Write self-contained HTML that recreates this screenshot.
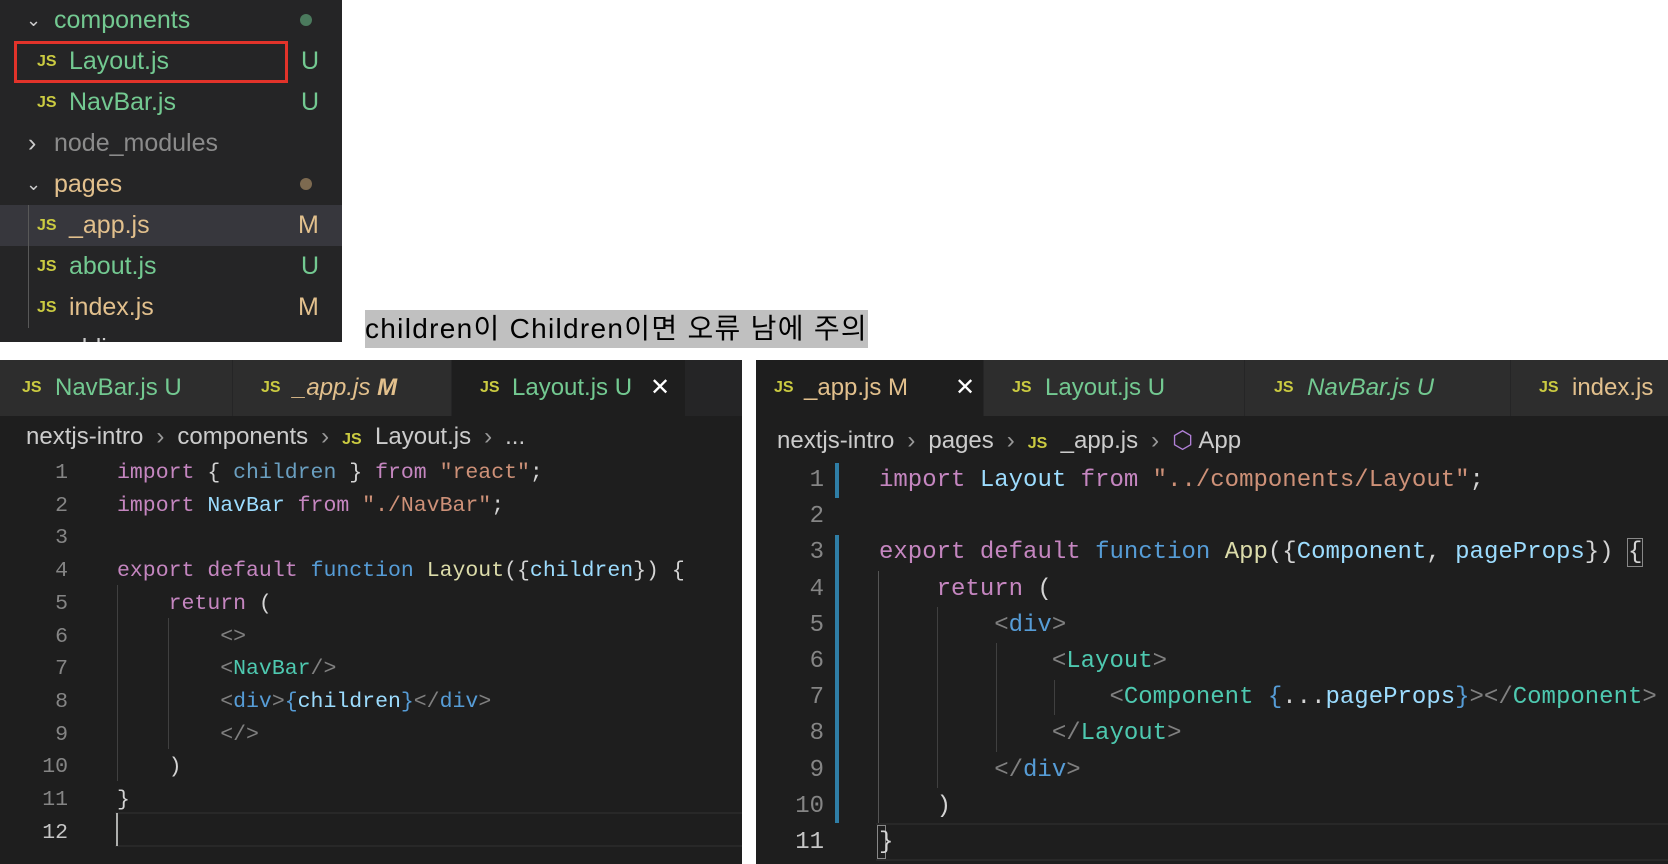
<!DOCTYPE html>
<html><head><meta charset="utf-8"><style>
*{margin:0;padding:0;box-sizing:border-box}
body{width:1668px;height:864px;background:#fff;position:relative;overflow:hidden;font-family:"Liberation Sans","Noto Sans CJK KR",sans-serif}
.abs{position:absolute;white-space:pre}
.sb{position:absolute;left:0;top:0;width:342px;height:342px;background:#252526;overflow:hidden}
.row{position:absolute;left:0;width:342px;height:41px;font-size:25px;line-height:41px}
.js{color:#cbcb41;font-weight:bold;font-size:16px;position:absolute}
.g{color:#73c991}.m{color:#e2c08d}.gr{color:#cccccc}
.panel{position:absolute;top:360px;height:504px;background:#1e1e1e;overflow:hidden}
.tabs{position:absolute;left:0;top:0;right:0;height:56px;background:#252526}
.tab{position:absolute;top:0;height:56px;background:#2d2d2d;font-size:24px;line-height:56px;border-right:1px solid #252526}
.tab.act{background:#1e1e1e}
.bc{position:absolute;font-size:24px;color:#cccccc;white-space:pre}
.ch{color:#999;margin:0 13px}
.code{font-family:"Liberation Mono","DejaVu Sans Mono",monospace}
.ln{position:absolute;text-align:right;color:#858585}
.kw{color:#c586c0}.bl{color:#569cd6}.v{color:#9cdcfe}.s{color:#ce9178}.f{color:#dcdcaa}.t{color:#4ec9b0}.p{color:#808080}
.guide{position:absolute;width:1px;background:#404040}
</style></head><body>
<div class="sb">
  <div class="row" style="top:0"><span class="abs gr" style="left:26px;font-size:18px">&#8964;</span><span class="abs g" style="left:54px">components</span><span class="abs" style="left:300px;top:14px;width:12px;height:12px;border-radius:6px;background:#4b7a5d"></span></div>
  <div class="row" style="top:41px"><span class="js" style="left:37px">JS</span><span class="abs g" style="left:69px">Layout.js</span><span class="abs g" style="left:301px">U</span></div>
  <div style="position:absolute;left:14px;top:41px;width:274px;height:42px;border:3px solid #e2332a"></div>
  <div class="row" style="top:82px"><span class="js" style="left:37px">JS</span><span class="abs g" style="left:69px">NavBar.js</span><span class="abs g" style="left:301px">U</span></div>
  <div class="row" style="top:123px"><span class="abs gr" style="left:28px">&#8250;</span><span class="abs" style="left:54px;color:#8b8b8b">node_modules</span></div>
  <div class="row" style="top:164px"><span class="abs gr" style="left:26px;font-size:18px">&#8964;</span><span class="abs m" style="left:54px">pages</span><span class="abs" style="left:300px;top:14px;width:12px;height:12px;border-radius:6px;background:#7d6a50"></span></div>
  <div class="row" style="top:205px;background:#37373d"><span class="js" style="left:37px">JS</span><span class="abs m" style="left:69px">_app.js</span><span class="abs m" style="left:298px">M</span></div>
  <div class="row" style="top:246px"><span class="js" style="left:37px">JS</span><span class="abs g" style="left:69px">about.js</span><span class="abs g" style="left:301px">U</span></div>
  <div class="row" style="top:287px"><span class="js" style="left:37px">JS</span><span class="abs m" style="left:69px">index.js</span><span class="abs m" style="left:298px">M</span></div>
  <div class="row" style="top:328px"><span class="abs gr" style="left:28px">&#8250;</span><span class="abs gr" style="left:54px">public</span></div>
  <div class="guide" style="left:28px;top:205px;height:123px;background:#585858"></div>
</div>
<div class="abs" style="left:365px;top:310px;width:503px;height:38px;background:#c0c0c0;font-size:28px;letter-spacing:1.3px;line-height:38px;color:#000;overflow:hidden">children이 Children이면 오류 남에 주의</div>

<!-- left panel -->
<div class="panel" style="left:0;width:742px">
  <div class="tabs">
    <div class="tab" style="left:0;width:233px"><span class="js" style="left:22px;line-height:56px">JS</span><span class="abs g" style="left:55px">NavBar.js U</span></div>
    <div class="tab" style="left:233px;width:219px"><span class="js" style="left:28px;line-height:56px">JS</span><span class="abs m" style="left:60px;font-style:italic">_app.js <b>M</b></span></div>
    <div class="tab act" style="left:452px;width:234px"><span class="js" style="left:28px;line-height:56px">JS</span><span class="abs g" style="left:60px">Layout.js U</span><span class="abs" style="left:198px;color:#fff;font-size:24px">&#10005;</span></div>
  </div>
  <div class="bc" style="left:26px;top:62px;line-height:30px">nextjs-intro<span class="ch">&#8250;</span>components<span class="ch">&#8250;</span><b style="color:#cbcb41;font-size:16px">JS</b>  Layout.js<span class="ch">&#8250;</span>...</div>
  <div class="guide" style="left:117px;top:225px;height:196px"></div>
  <div class="guide" style="left:168px;top:258px;height:131px"></div>
  <div style="position:absolute;left:115px;top:452px;width:640px;height:35px;border-top:2px solid #282828;border-bottom:2px solid #282828"></div>
  <div style="position:absolute;left:116px;top:453px;width:2px;height:33px;background:#aeafad"></div>
  <div class="code" style="position:absolute;left:0;top:97px;font-size:21.5px;line-height:32.7px">
    <div class="ln" style="left:0;width:68px">1<br>2<br>3<br>4<br>5<br>6<br>7<br>8<br>9<br>10<br>11<br><span style="color:#c6c6c6">12</span></div>
    <div class="abs" style="left:117px;top:0;color:#d4d4d4"><span class="kw">import</span> { <span style="color:#6a9fc0">children</span> } <span class="kw">from</span> <span class="s">"react"</span>;
<span class="kw">import</span> <span class="v">NavBar</span> <span class="kw">from</span> <span class="s">"./NavBar"</span>;

<span class="kw">export</span> <span class="kw">default</span> <span class="bl">function</span> <span class="f">Layout</span>({<span class="v">children</span>}) {
    <span class="kw">return</span> (
        <span class="p">&lt;&gt;</span>
        <span class="p">&lt;</span><span class="t">NavBar</span><span class="p">/&gt;</span>
        <span class="p">&lt;</span><span class="bl">div</span><span class="p">&gt;</span><span class="bl">{</span><span class="v">children</span><span class="bl">}</span><span class="p">&lt;/</span><span class="bl">div</span><span class="p">&gt;</span>
        <span class="p">&lt;/&gt;</span>
    )
}
</div>
  </div>
</div>

<!-- right panel -->
<div class="panel" style="left:756px;width:912px">
  <div class="tabs">
    <div class="tab act" style="left:0;width:228px"><span class="js" style="left:18px;line-height:56px">JS</span><span class="abs m" style="left:48px">_app.js M</span><span class="abs" style="left:199px;color:#fff;font-size:24px">&#10005;</span></div>
    <div class="tab" style="left:228px;width:261px"><span class="js" style="left:28px;line-height:56px">JS</span><span class="abs g" style="left:61px">Layout.js U</span></div>
    <div class="tab" style="left:489px;width:266px"><span class="js" style="left:29px;line-height:56px">JS</span><span class="abs g" style="left:62px;font-style:italic">NavBar.js U</span></div>
    <div class="tab" style="left:755px;width:200px"><span class="js" style="left:28px;line-height:56px">JS</span><span class="abs m" style="left:61px">index.js</span></div>
  </div>
  <div class="bc" style="left:21px;top:66px;line-height:30px">nextjs-intro<span class="ch">&#8250;</span>pages<span class="ch">&#8250;</span><b style="color:#cbcb41;font-size:16px">JS</b>  _app.js<span class="ch">&#8250;</span><span style="color:#b180d7">&#11041;</span> App</div>
  <div style="position:absolute;left:79px;top:103px;width:4px;height:35px;background:#2f7ea6"></div>
  <div style="position:absolute;left:79px;top:175px;width:4px;height:288px;background:#2f7ea6"></div>
  <div class="guide" style="left:122px;top:211px;height:252px;background:#555"></div>
  <div class="guide" style="left:181px;top:247px;height:181px"></div>
  <div class="guide" style="left:240px;top:283px;height:109px"></div>
  <div class="guide" style="left:298px;top:320px;height:35px"></div>
  <div style="position:absolute;left:120px;top:463px;width:800px;height:38px;border-top:2px solid #282828;border-bottom:2px solid #282828"></div>
  <div style="position:absolute;left:121px;top:465px;width:9px;height:34px;border:1px solid #888"></div>
  <div class="code" style="position:absolute;left:0;top:103px;font-size:24px;line-height:36.2px">
    <div class="ln" style="left:0;width:68px">1<br>2<br>3<br>4<br>5<br>6<br>7<br>8<br>9<br>10<br><span style="color:#c6c6c6">11</span></div>
    <div class="abs" style="left:123px;top:0;color:#d4d4d4"><span class="kw">import</span> <span class="v">Layout</span> <span class="kw">from</span> <span class="s">"../components/Layout"</span>;

<span class="kw">export</span> <span class="kw">default</span> <span class="bl">function</span> <span class="f">App</span>({<span class="v">Component</span>, <span class="v">pageProps</span>}) <span style="outline:1px solid #888">{</span>
    <span class="kw">return</span> (
        <span class="p">&lt;</span><span class="bl">div</span><span class="p">&gt;</span>
            <span class="p">&lt;</span><span class="t">Layout</span><span class="p">&gt;</span>
                <span class="p">&lt;</span><span class="t">Component</span> <span class="bl">{</span>...<span class="v">pageProps</span><span class="bl">}</span><span class="p">&gt;&lt;/</span><span class="t">Component</span><span class="p">&gt;</span>
            <span class="p">&lt;/</span><span class="t">Layout</span><span class="p">&gt;</span>
        <span class="p">&lt;/</span><span class="bl">div</span><span class="p">&gt;</span>
    )
}</div>
  </div>
</div>
</body></html>
